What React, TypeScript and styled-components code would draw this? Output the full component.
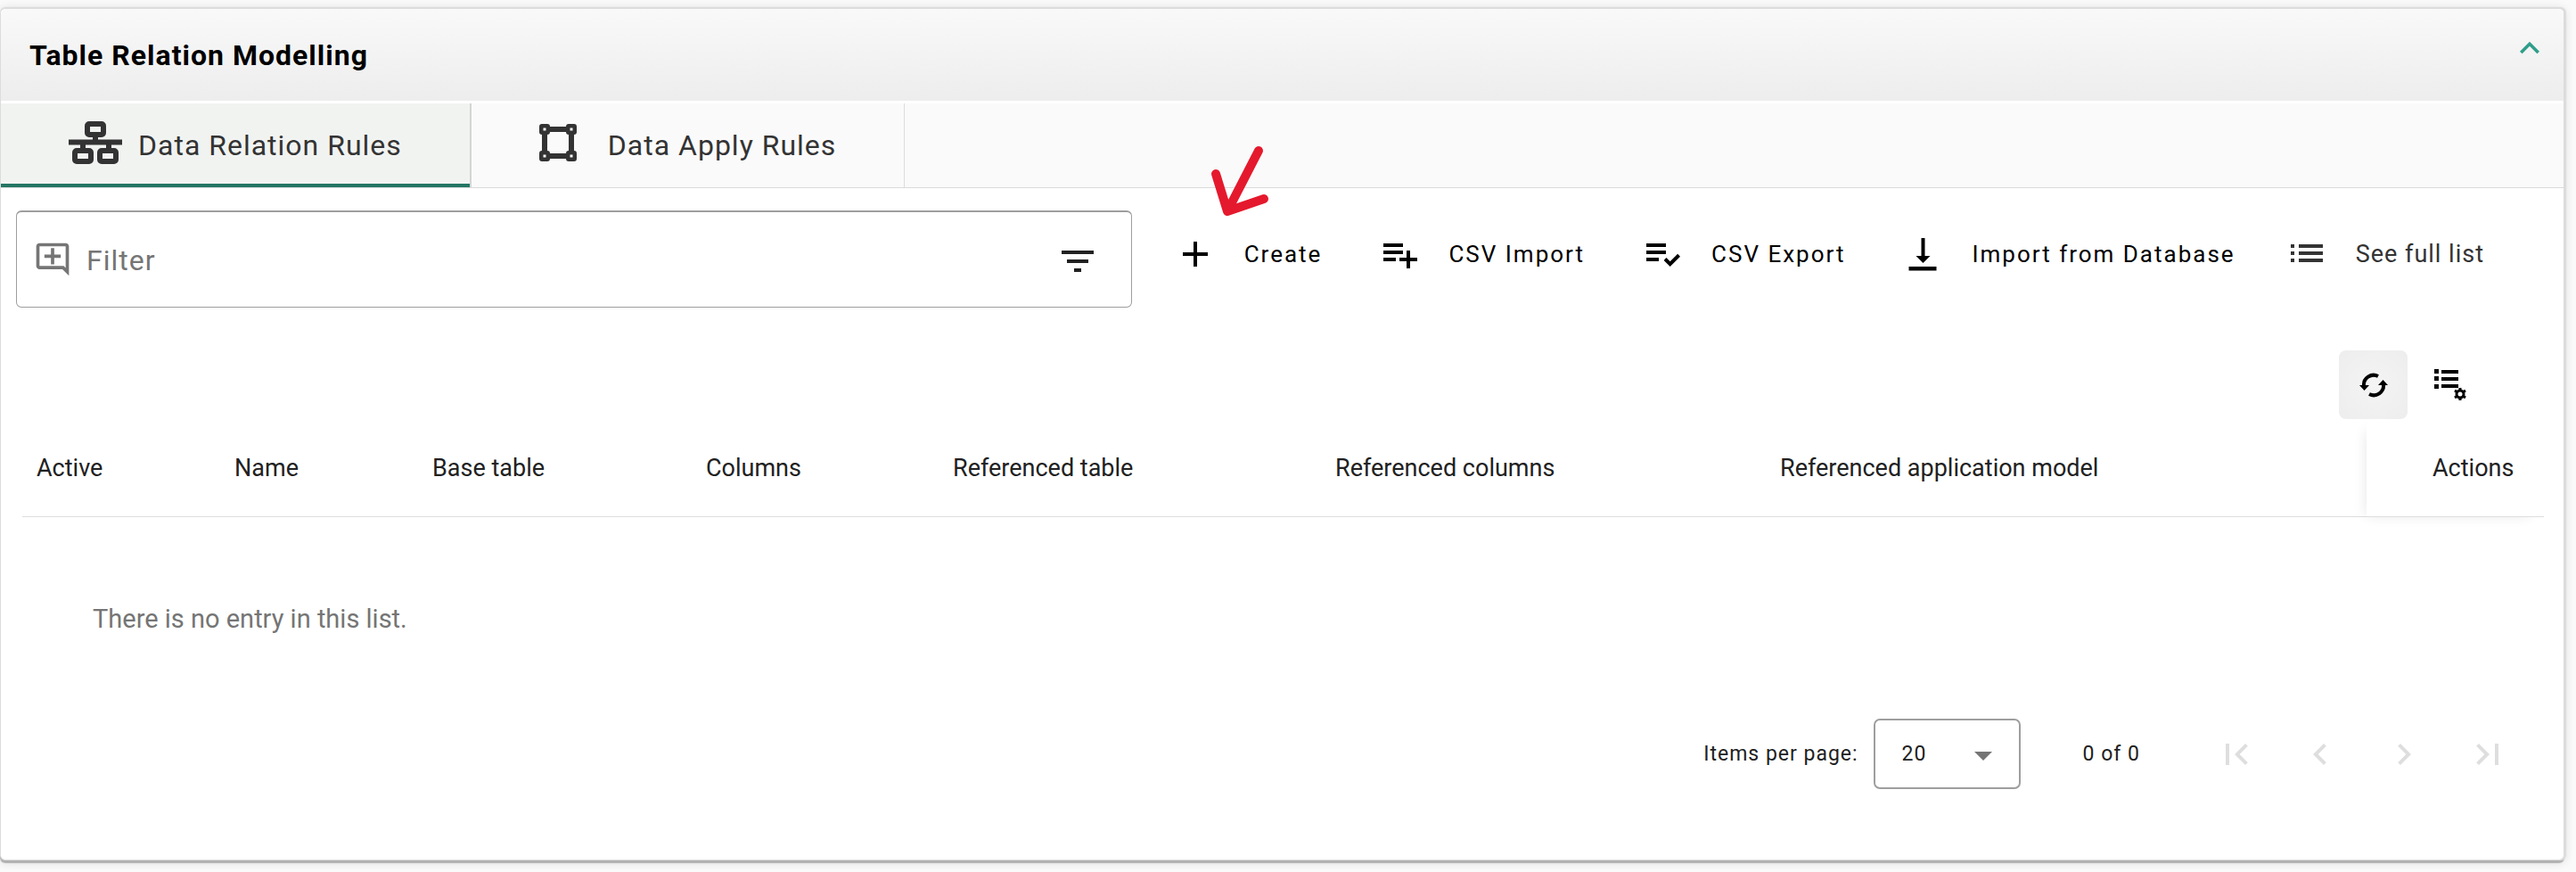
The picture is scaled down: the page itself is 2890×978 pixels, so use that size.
import React from "react";
import styled, { createGlobalStyle } from "styled-components";
import {
  MdAdd, MdPlaylistAdd, MdPlaylistAddCheck, MdFilterList, MdOutlineAddComment,
  MdFirstPage, MdLastPage, MdChevronLeft, MdChevronRight, MdKeyboardArrowUp,
} from "react-icons/md";

const Global = createGlobalStyle`
  *, *::before, *::after { box-sizing: border-box; }
  body { margin: 0; background: #fafafa; font-family: Roboto, "Liberation Sans", sans-serif; color: #212121; }
  button, input, select { font: inherit; color: inherit; letter-spacing: inherit; }
  button { background: none; border: 0; padding: 0; margin: 0; cursor: pointer; }
`;

const Page = styled.div`
  padding: 8px 13px 10px 0;
`;

const Card = styled.section`
  position: relative;
  background: #fff;
  border: 1px solid #dcdcdc;
  border-top-width: 2px;
  border-radius: 6px;
  box-shadow: 2px 0 1px #dcdcdc, 0 3px 1px #b0b0b0, 0 2px 12px rgba(0, 0, 0, 0.14);
`;

const Header = styled.header`
  display: flex;
  align-items: center;
  justify-content: space-between;
  height: 103px;
  padding: 0 16px 0 32px;
  border-radius: 6px 6px 0 0;
  background: linear-gradient(#f9f9f9, #ededed);
`;

const Title = styled.h1`
  margin: 0;
  font-size: 32px;
  line-height: 40px;
  font-weight: 700;
  letter-spacing: 1px;
  color: #000;
`;

const Collapse = styled.button`
  display: flex;
  padding-bottom: 16px;
  font-size: 44px;
  color: #2f9e8b;
`;

const Tabs = styled.div`
  display: flex;
  margin-top: 3px;
  height: 95px;
  background: #fafafa;
  border-bottom: 1px solid #dadada;
`;

const Tab = styled.button<{ $active?: boolean }>`
  display: flex;
  align-items: center;
  gap: ${(p) => (p.$active ? 18 : 35)}px;
  padding: 0 76px;
  border-right: ${(p) => (p.$active ? "2px solid #d3d5d3" : "1px solid #dcdcdc")};
  background: ${(p) => (p.$active ? "#f1f3f1" : "transparent")};
  box-shadow: ${(p) => (p.$active ? "inset 0 -4px #237663" : "none")};
  font-size: 32px;
  line-height: 40px;
  letter-spacing: 1px;
  color: #333;

  svg { flex: none; margin-top: -6px; }
`;

const Toolbar = styled.div`
  display: flex;
  align-items: flex-start;
  padding: 25px 89px 0 17px;
`;

const FilterBox = styled.label`
  flex: 1;
  display: flex;
  align-items: center;
  min-width: 0;
  height: 109px;
  padding: 0 36px 0 18px;
  border: 1px solid #9e9e9e;
  border-top-width: 2px;
  border-radius: 6px;
  color: #757575;
  font-size: 44px;
`;

const FilterInput = styled.input`
  flex: 1;
  min-width: 0;
  margin-left: 16px;
  padding: 2px 0 0;
  border: 0;
  outline: 0;
  background: transparent;
  font-size: 32px;
  line-height: 40px;
  letter-spacing: 1px;
  color: #333;

  &::placeholder { color: #757575; opacity: 1; }
`;

const FilterButton = styled.button`
  display: flex;
  padding-top: 4px;
  font-size: 48px;
  color: #212121;
`;

const Actions = styled.nav`
  display: flex;
  gap: 63px;
  margin-left: 47px;
  padding-top: 29px;
`;

const ToolButton = styled.button`
  display: flex;
  align-items: center;
  gap: 31px;
  height: 40px;
  white-space: nowrap;
  font-size: 26px;
  line-height: 40px;
  letter-spacing: 2px;
  color: #000;

  svg { flex: none; width: 48px; height: 48px; }
`;

const FullListLink = styled.a`
  display: flex;
  align-items: center;
  gap: 31px;
  height: 40px;
  margin-left: -7px;
  white-space: nowrap;
  font-size: 27px;
  line-height: 40px;
  letter-spacing: 1px;
  color: #333;
  text-decoration: none;

  svg { flex: none; width: 48px; height: 48px; }
`;

const TableTools = styled.div`
  display: flex;
  justify-content: flex-end;
  gap: 9px;
  padding: 48px 89px 0 0;
`;

const SquareButton = styled.button<{ $on?: boolean }>`
  display: flex;
  align-items: center;
  justify-content: center;
  width: 77px;
  height: 77px;
  border-radius: 8px;
  background: ${(p) => (p.$on ? "radial-gradient(#f4f4f4, #ededed)" : "transparent")};
  color: #000;
`;

const TableWrap = styled.div`
  padding: 0 22px 0 24px;
`;

const Table = styled.table`
  width: 100%;
  table-layout: fixed;
  border-collapse: separate;
  border-spacing: 0;
`;

const Th = styled.th`
  height: 110px;
  padding: 0 0 0 16px;
  text-align: left;
  white-space: nowrap;
  font-size: 27px;
  line-height: 32px;
  font-weight: 400;
  border-bottom: 1px solid #dedede;
`;

const ActionsTh = styled(Th)`
  padding-left: 74px;
  background: #fff;
  box-shadow: -8px 6px 14px -8px rgba(0, 0, 0, 0.1);
`;

const EmptyCell = styled.td`
  height: 226px;
  padding: 2px 0 0 79px;
  font-size: 29px;
  line-height: 32px;
  color: #757575;
`;

const Paginator = styled.footer`
  display: flex;
  align-items: center;
  justify-content: flex-end;
  height: 79px;
  margin-bottom: 79px;
  padding-right: 61px;
  font-size: 23px;
  line-height: 32px;
  letter-spacing: 1px;
`;

const SizeLabel = styled.label`
  display: flex;
  align-items: center;
  gap: 17px;
`;

const SelectBox = styled.span`
  position: relative;
  display: flex;
`;

const SizeSelect = styled.select`
  appearance: none;
  width: 165px;
  height: 79px;
  padding: 0 30px;
  border: 2px solid #9e9e9e;
  border-radius: 7px;
  background: transparent;
`;

const Caret = styled.svg`
  position: absolute;
  right: 32px;
  top: 37px;
  pointer-events: none;
`;

const Range = styled.span`
  margin: 0 84px 0 70px;
`;

const Pages = styled.div`
  display: flex;
  gap: 46px;
`;

const PageButton = styled.button`
  display: flex;
  font-size: 48px;
  color: #dedede;
`;

const Pointer = styled.svg`
  position: absolute;
  left: 1352px;
  top: 151px;
  pointer-events: none;
`;

const columns = [
  { label: "Active", width: "222px" },
  { label: "Name", width: "222px" },
  { label: "Base table", width: "307px" },
  { label: "Columns", width: "277px" },
  { label: "Referenced table", width: "429px" },
  { label: "Referenced columns", width: "499px" },
  { label: "Referenced application model", width: "auto" },
];

const SitemapIcon = () => (
  <svg width="60" height="50" viewBox="0 0 60 50" fill="none" stroke="currentColor" strokeWidth="6">
    <rect x="21" y="4" width="18" height="12" rx="2" />
    <rect x="7" y="34" width="18" height="12" rx="2" />
    <rect x="35" y="34" width="18" height="12" rx="2" />
    <path d="M0 24.500H60M30 17v8M16 25v8M45 25v8" />
  </svg>
);

const BoundsIcon = () => (
  <svg width="42" height="42" viewBox="0 0 42 42" fill="none" stroke="currentColor" strokeWidth="4">
    <path d="M6 6H36V36H6Z" strokeWidth="6" />
    {[[6, 6], [36, 6], [6, 36], [36, 36]].map(([x, y]) => (
      <g key={`${x}-${y}`}>
        <rect x={x - 4} y={y - 4} width="8" height="8" rx="1" />
        <rect x={x - 1} y={y - 1} width="2" height="2" fill="#fafafa" stroke="#fafafa" strokeWidth="1" />
      </g>
    ))}
  </svg>
);

const DownloadIcon = () => (
  <svg viewBox="0 0 48 48" fill="currentColor">
    <path d="M22.500 6h4v20h6l-8 8-8-8h6ZM8.500 38h31v4.500h-31Z" />
  </svg>
);

const ListIcon = () => (
  <svg viewBox="0 0 48 48" fill="currentColor">
    <path d="M6 13h4v4H6zM6 21h4v4H6zM6 29h4v4H6zM15 13h27v4H15zM15 21h27v4H15zM15 29h27v4H15z" />
  </svg>
);

const RefreshIcon = () => (
  <svg width="34" height="30" viewBox="0 0 34 30" fill="none" stroke="currentColor" strokeWidth="4">
    <path d="M6 16A11 11 0 0 1 22 5M28 14A11 11 0 0 1 12 25" />
    <path d="M1 15h11l-5.500 6ZM22 15h11l-5.500-6Z" fill="currentColor" stroke="none" />
  </svg>
);

const ListSettingsIcon = () => (
  <svg width="38" height="38" viewBox="0 0 38 38" fill="currentColor">
    <path d="M1 1h5v5H1zM1 9h5v5H1zM1 18h5v5H1zM9 2h19v4H9zM9 10h19v4H9zM9 18h19v4H9z" />
    <circle cx="30" cy="29" r="4" fill="#fff" stroke="currentColor" strokeWidth="3" />
    <path d="M30 22v3M30 33v3M24 25l3 2M36 25l-3 2M24 33l3-2M36 33l-3-2" stroke="currentColor" strokeWidth="3" />
  </svg>
);

export default function App() {
  return (
    <Page>
      <Global />
      <Card>
        <Header>
          <Title>Table Relation Modelling</Title>
          <Collapse aria-label="Collapse"><MdKeyboardArrowUp /></Collapse>
        </Header>
        <Tabs role="tablist">
          <Tab $active role="tab" aria-selected="true"><SitemapIcon />Data Relation Rules</Tab>
          <Tab role="tab" aria-selected="false"><BoundsIcon />Data Apply Rules</Tab>
        </Tabs>
        <Toolbar>
          <FilterBox>
            <MdOutlineAddComment />
            <FilterInput placeholder="Filter" aria-label="Filter" />
            <FilterButton aria-label="Filter options"><MdFilterList /></FilterButton>
          </FilterBox>
          <Actions>
            <ToolButton><MdAdd />Create</ToolButton>
            <ToolButton><MdPlaylistAdd />CSV Import</ToolButton>
            <ToolButton><MdPlaylistAddCheck />CSV Export</ToolButton>
            <ToolButton><DownloadIcon />Import from Database</ToolButton>
            <FullListLink href="#list"><ListIcon />See full list</FullListLink>
          </Actions>
        </Toolbar>
        <TableTools>
          <SquareButton $on aria-label="Refresh"><RefreshIcon /></SquareButton>
          <SquareButton aria-label="List settings"><ListSettingsIcon /></SquareButton>
        </TableTools>
        <TableWrap>
          <Table>
            <colgroup>
              {columns.map((c) => <col key={c.label} style={{ width: c.width }} />)}
              <col style={{ width: "199px" }} />
            </colgroup>
            <thead>
              <tr>
                {columns.map((c) => <Th key={c.label}>{c.label}</Th>)}
                <ActionsTh>Actions</ActionsTh>
              </tr>
            </thead>
            <tbody>
              <tr><EmptyCell colSpan={8}>There is no entry in this list.</EmptyCell></tr>
            </tbody>
          </Table>
        </TableWrap>
        <Paginator>
          <SizeLabel>
            Items per page:
            <SelectBox>
              <SizeSelect defaultValue="20">
                <option>10</option>
                <option>20</option>
                <option>50</option>
              </SizeSelect>
              <Caret width="20" height="10" viewBox="0 0 20 10"><path d="M0 0h20L10 10z" fill="#757575" /></Caret>
            </SelectBox>
          </SizeLabel>
          <Range>0 of 0</Range>
          <Pages>
            <PageButton disabled aria-label="First page"><MdFirstPage /></PageButton>
            <PageButton disabled aria-label="Previous page"><MdChevronLeft /></PageButton>
            <PageButton disabled aria-label="Next page"><MdChevronRight /></PageButton>
            <PageButton disabled aria-label="Last page"><MdLastPage /></PageButton>
          </Pages>
        </Paginator>
        <Pointer width="80" height="96" viewBox="0 0 80 96" fill="none" stroke="#e5192d" strokeWidth="10" strokeLinecap="round" strokeLinejoin="round">
          <path d="M59 8L25 74M11 34L24 76L65 62" />
        </Pointer>
      </Card>
    </Page>
  );
}
